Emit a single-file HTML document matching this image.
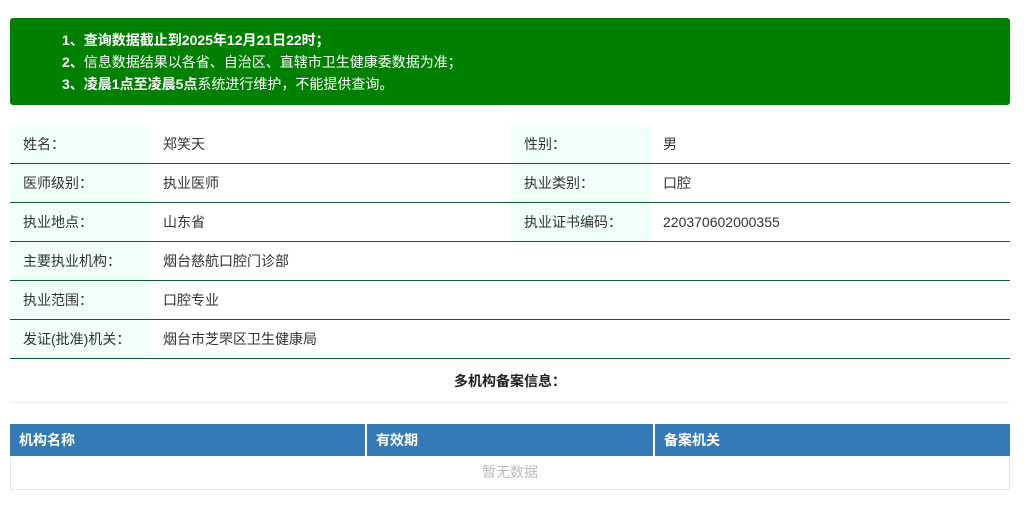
<!DOCTYPE html>
<html><head><meta charset="utf-8"><style>
*{margin:0;padding:0;box-sizing:border-box}
body{width:1026px;height:530px;background:#fff;font-family:"Liberation Sans","Noto Sans CJK SC",sans-serif;font-size:14px;color:#333;position:relative;overflow:hidden}
.notice{position:absolute;left:10px;top:18px;width:1000px;height:87px;background:#008000;border-radius:3px;color:#fff;font-weight:bold;padding:11px 0 0 52px;line-height:22px;font-size:14px}
.notice .n{font-weight:normal}
.row{position:absolute;left:10px;width:1000px;height:39px;border-bottom:1px solid #0d5e30}
.c{position:absolute;top:0;height:38px;line-height:39px;padding-left:13px}
.l{background:#f0fff7;width:140px}
.title{position:absolute;left:10px;top:360px;width:1000px;height:43px;border-bottom:1px solid #eee;text-align:center;line-height:42px;font-weight:bold;color:#222}
.th{position:absolute;top:424px;height:32px;background:#337ab7;color:#fff;font-weight:bold;line-height:32px;padding-left:9px}
.empty{position:absolute;left:10px;top:456px;width:1000px;height:34px;border:1px solid #e8e8e8;border-top:none;text-align:center;line-height:32px;color:#bbb}
</style></head><body>
<div class="notice">
<div>1、查询数据截止到2025年12月21日22时；</div>
<div>2、<span class="n">信息数据结果以各省、自治区、直辖市卫生健康委数据为准；</span></div>
<div>3、凌晨1点至凌晨5点<span class="n">系统进行维护，不能提供查询。</span></div>
</div>
<div class="row" style="top:125px"><div class="c l" style="left:0">姓名：</div><div class="c" style="left:140px">郑笑天</div><div class="c l" style="left:501px">性别：</div><div class="c" style="left:640px">男</div></div>
<div class="row" style="top:164px"><div class="c l" style="left:0">医师级别：</div><div class="c" style="left:140px">执业医师</div><div class="c l" style="left:501px">执业类别：</div><div class="c" style="left:640px">口腔</div></div>
<div class="row" style="top:203px"><div class="c l" style="left:0">执业地点：</div><div class="c" style="left:140px">山东省</div><div class="c l" style="left:501px">执业证书编码：</div><div class="c" style="left:640px">220370602000355</div></div>
<div class="row" style="top:242px"><div class="c l" style="left:0">主要执业机构：</div><div class="c" style="left:140px">烟台慈航口腔门诊部</div></div>
<div class="row" style="top:281px"><div class="c l" style="left:0">执业范围：</div><div class="c" style="left:140px">口腔专业</div></div>
<div class="row" style="top:320px"><div class="c l" style="left:0">发证(批准)机关：</div><div class="c" style="left:140px">烟台市芝罘区卫生健康局</div></div>
<div class="title">多机构备案信息：</div>
<div class="th" style="left:10px;width:355px">机构名称</div>
<div class="th" style="left:367px;width:286px">有效期</div>
<div class="th" style="left:655px;width:355px">备案机关</div>
<div class="empty">暂无数据</div>
</body></html>
